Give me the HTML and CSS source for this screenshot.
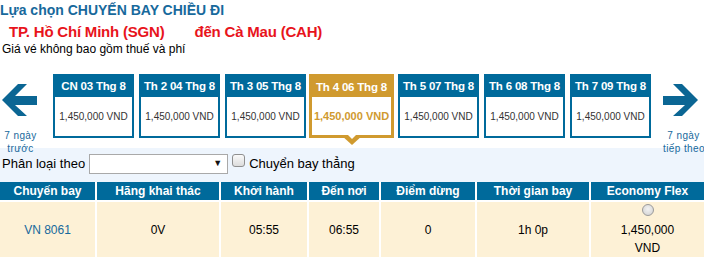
FILE: index.html
```html
<!DOCTYPE html>
<html lang="vi">

<head>
    <meta charset="UTF-8">
    <meta name="viewport" content="width=device-width, initial-scale=1.0">
    <title>Lựa chọn chuyến bay</title>
    <link rel="stylesheet" href="styles.css">
</head>

<body>
    <div class="top">
        <h2 class="title">Lựa chọn CHUYẾN BAY CHIỀU ĐI</h2>
        <div class="route">
            <span class="from">TP. Hồ Chí Minh (SGN)</span>
            <span class="to">đến Cà Mau (CAH)</span>
        </div>
        <p class="note">Giá vé không bao gồm thuế và phí</p>
    </div>

    <div class="strip">
        <a class="nav prev" href="#">
            <svg class="arrow" width="35" height="34" viewBox="0 0 35 34">
                <polygon points="0,17 16,1 25,1 13,13 35,13 35,22 13,22 25,33 16,33" fill="#0b6694" />
            </svg>
            <span class="nav-text">7 ngày<br>trước</span>
        </a>

        <div class="days">
            <div class="day">
                <div class="day-head">CN 03 Thg 8</div>
                <div class="day-price">1,450,000 VND</div>
            </div>
            <div class="day">
                <div class="day-head">Th 2 04 Thg 8</div>
                <div class="day-price">1,450,000 VND</div>
            </div>
            <div class="day">
                <div class="day-head">Th 3 05 Thg 8</div>
                <div class="day-price">1,450,000 VND</div>
            </div>
            <div class="day active">
                <div class="day-head">Th 4 06 Thg 8</div>
                <div class="day-price">1,450,000 VND</div>
            </div>
            <div class="day">
                <div class="day-head">Th 5 07 Thg 8</div>
                <div class="day-price">1,450,000 VND</div>
            </div>
            <div class="day">
                <div class="day-head">Th 6 08 Thg 8</div>
                <div class="day-price">1,450,000 VND</div>
            </div>
            <div class="day">
                <div class="day-head">Th 7 09 Thg 8</div>
                <div class="day-price">1,450,000 VND</div>
            </div>
        </div>

        <a class="nav next" href="#">
            <svg class="arrow" width="35" height="34" viewBox="0 0 35 34">
                <polygon points="35,17 19,1 10,1 22,13 0,13 0,22 22,22 10,33 19,33" fill="#0b6694" />
            </svg>
            <span class="nav-text">7 ngày<br>tiếp theo</span>
        </a>
    </div>

    <div class="filter">
        <span class="filter-label">Phân loại theo</span>
        <span class="select-wrap">
            <select class="sort"></select>
            <span class="caret">▼</span>
        </span>
        <label class="direct"><input type="checkbox"> Chuyển bay thẳng</label>
    </div>

    <table class="flights">
        <colgroup>
            <col style="width: 95px">
            <col style="width: 124px">
            <col style="width: 88px">
            <col style="width: 72px">
            <col style="width: 96px">
            <col style="width: 114px">
            <col style="width: 115px">
        </colgroup>
        <thead>
            <tr>
                <th>Chuyến bay</th>
                <th>Hãng khai thác</th>
                <th>Khởi hành</th>
                <th>Đến nơi</th>
                <th>Điểm dừng</th>
                <th>Thời gian bay</th>
                <th>Economy Flex</th>
            </tr>
        </thead>
        <tbody>
            <tr>
                <td><a class="code" href="#">VN 8061</a></td>
                <td>0V</td>
                <td>05:55</td>
                <td>06:55</td>
                <td>0</td>
                <td>1h 0p</td>
                <td class="fare">
                    <input type="radio" name="fare"><br>
                    1,450,000<br>VND
                </td>
            </tr>
        </tbody>
    </table>
</body>

</html>
```

FILE: styles.css
```css
* {
    padding: 0;
    margin: 0;
    box-sizing: border-box;
}

body {
    font-family: "Liberation Sans", Arial, sans-serif;
    color: #000;
    background: #fff;
    width: 704px;
}

.title {
    font-size: 14px;
    font-weight: bold;
    color: #17699c;
    line-height: 21px;
}

.route {
    font-size: 15px;
    font-weight: bold;
    color: #e8141c;
    line-height: 21px;
    padding-left: 9px;
    letter-spacing: -0.2px;
}

.route .to {
    margin-left: 26px;
}

.note {
    font-size: 12px;
    line-height: 15px;
    padding-left: 2px;
}

.strip {
    display: flex;
    margin-top: 17px;
    height: 74px;
}

.nav {
    width: 53px;
    flex-shrink: 0;
    display: flex;
    flex-direction: column;
    align-items: flex-start;
    text-decoration: none;
    color: #17699c;
}

.nav .arrow {
    flex-shrink: 0;
    margin-top: 9px;
}

.prev {
    padding-left: 2px;
}

.prev .nav-text {
    width: 37px;
}

.next {
    padding-left: 12px;
}

.next .nav-text {
    width: 41px;
    margin-left: 0;
}

.nav-text {
    flex-shrink: 0;
    font-size: 10px;
    letter-spacing: 0.4px;
    line-height: 13px;
    text-align: center;
    white-space: nowrap;
    margin-top: 12px;
}

.days {
    display: flex;
    gap: 5px;
}

.day {
    width: 81px;
    height: 64px;
    border: 2px solid #006a9b;
    display: flex;
    flex-direction: column;
    background: #fff;
}

.day-head {
    height: 21px;
    background: #006a9b;
    color: #fff;
    font-size: 11.5px;
    font-weight: bold;
    text-align: center;
    line-height: 20px;
    letter-spacing: -0.2px;
}

.day-price {
    flex: 1;
    display: flex;
    align-items: center;
    justify-content: center;
    font-size: 10px;
    color: #333;
}

.day.active {
    position: relative;
    width: 85px;
    border: 3px solid #d09a2f;
    margin-left: -2px;
    margin-right: -1px;
}

.day.active .day-head {
    height: 20px;
    background: #d09a2f;
}

.day.active .day-price {
    font-size: 11px;
    font-weight: bold;
    color: #d09a2f;
}

.day.active::before,
.day.active::after {
    content: "";
    position: absolute;
    left: 50%;
    border-style: solid;
    border-color: transparent;
}

.day.active::before {
    top: 100%;
    margin-left: -11px;
    border-width: 10px 11px 0;
    border-top-color: #d09a2f;
}

.day.active::after {
    top: 100%;
    margin-left: -7px;
    margin-top: -3px;
    border-width: 7px 7px 0;
    border-top-color: #fff;
}

.filter {
    background: #eef5fd;
    height: 34px;
    display: flex;
    align-items: flex-start;
    padding: 6px 0 0 2px;
    font-size: 13px;
}

.filter-label {
    line-height: 20px;
    margin-right: 4px;
}

.select-wrap {
    position: relative;
    width: 139px;
    height: 20px;
}

.sort {
    appearance: none;
    width: 100%;
    height: 20px;
    border: 1px solid #a9a9a9;
    background: #fff;
}

.caret {
    position: absolute;
    right: 6px;
    top: 4px;
    font-size: 9px;
    color: #111;
    pointer-events: none;
}

.direct {
    display: flex;
    align-items: flex-start;
    line-height: 20px;
    margin-left: 4px;
}

.direct input {
    appearance: none;
    width: 13px;
    height: 13px;
    margin: 0 4px 0 0;
    border: 1px solid #8f8f8f;
    border-radius: 3px;
    background: linear-gradient(#fafafa, #dcdcdc);
}

.flights {
    width: 704px;
    table-layout: fixed;
    border-collapse: separate;
    border-spacing: 0;
    font-size: 12px;
}

.flights th,
.flights td {
    text-align: center;
    border-left: 2px solid #fff;
}

.flights th:first-child,
.flights td:first-child {
    border-left: none;
}

.flights th {
    background: #006a9b;
    color: #fff;
    height: 18px;
    line-height: 16px;
    font-weight: bold;
}

.flights td {
    background: #fdf1d6;
    border-top: 2px solid #fff;
    height: 57px;
    vertical-align: middle;
    line-height: 18px;
}

.code {
    color: #17699c;
    text-decoration: none;
}

.fare input {
    appearance: none;
    width: 12px;
    height: 12px;
    margin: 0;
    border: 1px solid #9a9a9a;
    border-radius: 50%;
    background: radial-gradient(circle at 50% 40%, #f2f2f2, #cfcfcf);
}
```
